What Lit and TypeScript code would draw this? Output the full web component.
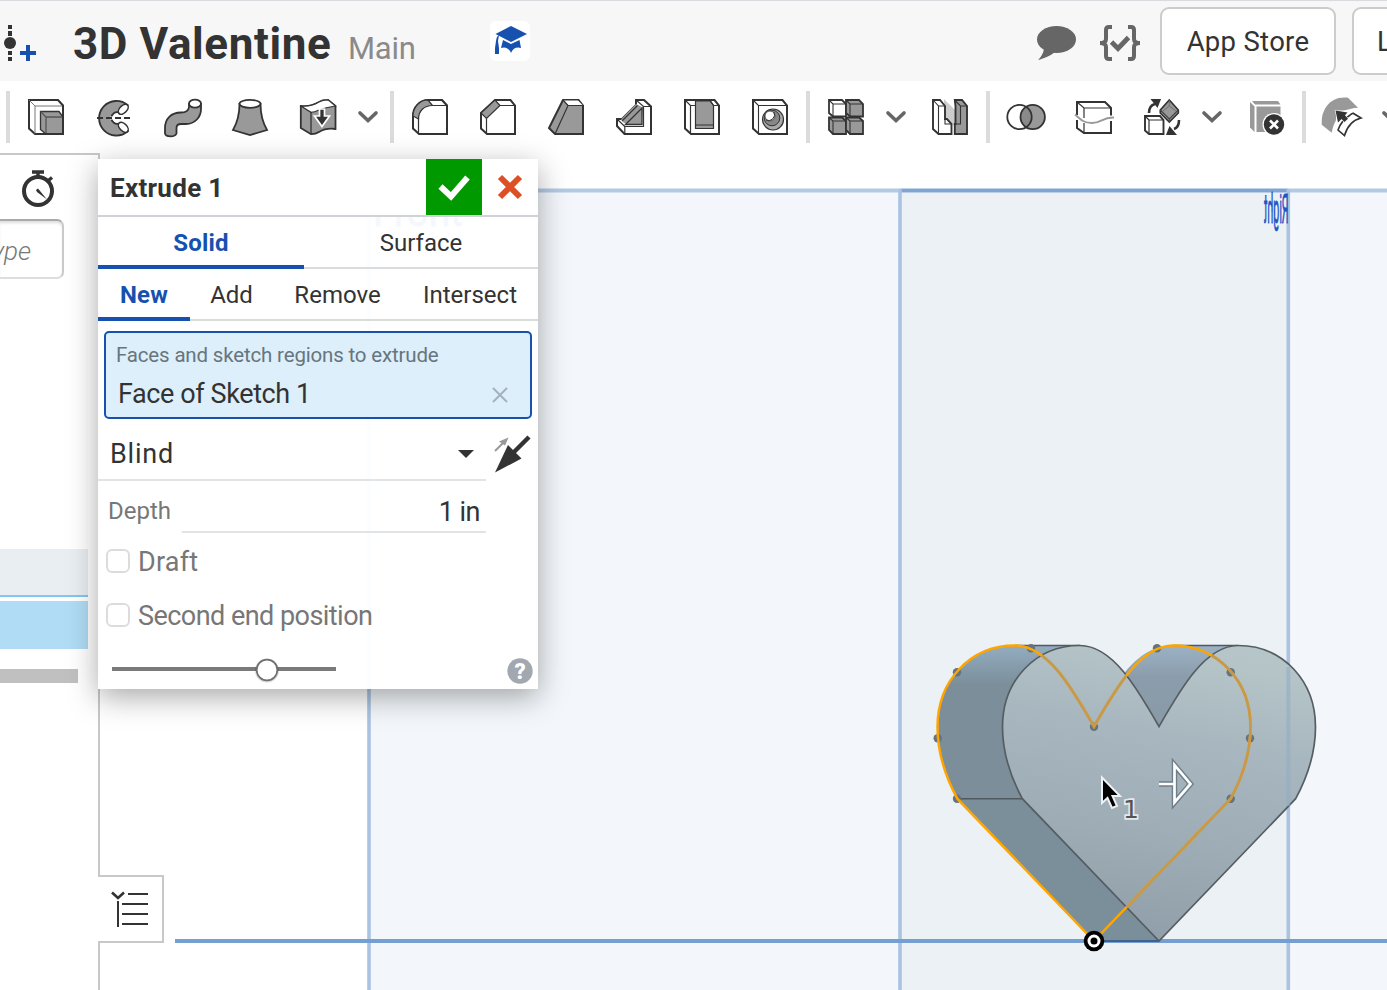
import { LitElement, html, css, svg } from "lit";
import { customElement, property } from "lit/decorators.js";

const D = "#333";
const G = "#999";

const glyphs: Record<string, unknown> = {
  extrude: svg`<path d="M1 1H30L35 6.5V35H7L1 29.5Z" fill="#fff" stroke=${D} stroke-width="2"/>
    <path d="M1 1L7 7V35M7 7H35" fill="none" stroke="#777"/>
    <path d="M12.5 12.5H31L35 18V35H18L12.5 30.5Z" fill=${G} stroke=${D} stroke-width="1.3"/>
    <path d="M12.5 12.5L18 18V35M18 18H35" fill="none" stroke="#555" stroke-width="1.3"/><path d="M35 6V35H7" fill="none" stroke=${D} stroke-width="2"/>`,
  revolve: svg`<path d="M31.5 6A17.3 17.3 0 1 0 31.5 32.5L23 24.5A5.8 5.8 0 1 1 23 13.5Z" fill=${G} stroke=${D} stroke-width="1.8"/>
    <ellipse cx="27.3" cy="10.3" rx="6" ry="3.6" transform="rotate(-46 27.3 10.3)" fill="#fff" stroke=${D} stroke-width="1.6"/>
    <ellipse cx="27.3" cy="28.300" rx="6" ry="3.6" transform="rotate(46 27.3 28.300)" fill="#fff" stroke=${D} stroke-width="1.6"/>
    <path d="M14 19H30" stroke="#fff" stroke-width="3"/><path d="M1 19H36" stroke=${D} stroke-width="1.8" stroke-dasharray="6 3"/>`,
  sweep: svg`<path d="M25 5V8C24.5 12 22 13.5 17 13.5C7 13.5 1 20 1 29V34.5C2 38.3 11 38.3 12.5 34.5V29C12.5 26 14 25 17 25H22C31 25 37 18 37 10V5Z" fill=${G} stroke=${D} stroke-width="1.8"/>
    <ellipse cx="31" cy="4.7" rx="6" ry="4" fill="#fff" stroke=${D} stroke-width="1.8"/>`,
  loft: svg`<path d="M7.5 5C7.5 15 5 24 1 31L18 36L35 31C31 24 28.5 15 28.5 5Z" fill=${G} stroke=${D} stroke-width="1.8"/>
    <ellipse cx="18" cy="4.8" rx="10.5" ry="4" fill="#fff" stroke=${D} stroke-width="1.8"/>`,
  thicken: svg`<path d="M.8 7C8 8 14 6 19 3C22 1 25 .8 28 .8L35.5 7V30C28 29 24 30 19 33C16 35 14 35.2 11 35.2L.8 29Z" fill=${G} stroke=${D} stroke-width="1.8"/>
    <path d="M.8 7C8 8 14 6 19 3C22 1 25 .8 28 .8L35.5 7C28 8 24 9 19 11C16 12.5 14 13.3 11 13.3Z" fill="#fff" stroke=${D} stroke-width="1.2"/>
    <path d="M11 13V35" stroke=${D} stroke-width="1.3"/><path d="M19.5 10H24.5V17H29.5L22 27.5L14.5 17H19.5Z" fill=${D} stroke="#fff" stroke-width="1.7"/>`,
  fillet: svg`<path d="M1 17C1 8 8 1 16 1H30L35 6.5V35H7L1 29.5Z" fill="#fff" stroke=${D} stroke-width="2"/>
    <path d="M1 17C1 8 8 1 16 1L20.5 6.5C12 6.5 6.5 12 6.5 20Z" fill=${G} stroke=${D} stroke-width="1.2"/><path d="M20 6.5H35M6.5 19V35M30 1L35 6.5" fill="none" stroke=${D} stroke-width="1.2"/>`,
  chamfer: svg`<path d="M1 14L15 1H30.5L35 6.5V35H7L1 29.5Z" fill="#fff" stroke=${D} stroke-width="2"/>
    <path d="M1 14L15 1L20 6.5L6.5 19.5Z" fill=${G} stroke=${D} stroke-width="1.2"/><path d="M20 6.5H35M6.5 19.5V35" fill="none" stroke=${D} stroke-width="1.2"/>`,
  draft: svg`<path d="M15 1H30.5L35 6.5V35H7L1 29Z" fill=${G} stroke=${D} stroke-width="2"/>
    <path d="M15.5 1.5H30L34.5 6H20Z" fill="#fff"/><path d="M7 35L20 6.5H35M15 1L20 6.5" fill="none" stroke=${D} stroke-width="1.2"/>`,
  rib: svg`<path d="M20 1H28L35 7.500V35H8.500L1 27V20H6L20 6Z" fill="#fff" stroke=${D} stroke-width="2"/>
    <path d="M5 20.500L20 5L27 8.500L25.500 24.500H10L8 24Z" fill=${G}/><path d="M9.500 25.500L26 9V25.500Z" fill=${G} stroke=${D} stroke-width="1.300"/>
    <path d="M1 20L8.800 27.500V35M20 1L27.500 7.500H35M8.800 27.500H27.500V7.500M6 22L21.500 6.500" fill="none" stroke=${D} stroke-width="1.200"/>`,
  shell: svg`<path d="M1 1H30.5L35 6.5V35H7L1 29.5Z" fill="#fff" stroke=${D} stroke-width="2"/>
    <path d="M11.5 2V29.5H29.5V6.5L26 2Z" fill=${G} stroke=${D} stroke-width="1.2"/><path d="M1 1L6.5 6.5V35M6.5 6.5H11.5M29.5 6.5H35M26 1L29.5 6.5M11.5 26H29.5" fill="none" stroke=${D} stroke-width="1.2"/>`,
  hole: svg`<path d="M1 1H30.5L35 6.5V35H7L1 29.5Z" fill="#fff" stroke=${D} stroke-width="2"/><path d="M1 1L6.5 6.5V35M6.5 6.5H35" fill="none" stroke=${D} stroke-width="1.1"/>
    <circle cx="21" cy="20.5" r="10.5" fill="#aaa" stroke=${D} stroke-width="1.2"/><circle cx="20" cy="19" r="7.8" fill="#888" stroke=${D} stroke-width="1"/><circle cx="18" cy="17" r="5" fill="#fff" stroke="#555" stroke-width="1"/><path d="M22 13A6 6 0 0 1 14 21" fill="none" stroke=${D}/>`,
  pattern: svg`<g stroke=${D} stroke-width="1.8"><path d="M1 1H14L18 5V17.5H5L1 14Z" fill="#fff"/><path d="M18 1H31L35 5V17.5H22L18 14Z" fill=${G}/><path d="M1 18.5H14L18 22V35H5L1 31Z" fill=${G}/><path d="M18 18.5H31L35 22V35H22L18 31Z" fill=${G}/></g>
    <path d="M1 1L5 5V17.5M5 5H18M18 1L22 5V17.5M22 5H35M1 18.5L5 22V35M5 22H18M18 18.5L22 22V35M22 22H35" fill="none" stroke=${D} stroke-width="1.1"/>`,
  mirror: svg`<path d="M12 0L24 12V28L12 20Z" fill="#ccc"/><path d="M1 1H8L13 7V20H15L19.5 25V35H6.5L1 30Z" fill="#fff" stroke=${D} stroke-width="1.9"/><path d="M1 1L6.5 7V35M6.5 7H13M13 20V25H19.5" fill="none" stroke=${D} stroke-width="1.1"/>
    <path d="M22.8 1H30L35 7V35H22.8V25H23.500V7Z" fill=${G} stroke=${D} stroke-width="1.9"/><path d="M22.5 1L28.5 7H35M28.5 7V25H22.5" fill="none" stroke=${D} stroke-width="1.1"/>`,
  bool: svg`<circle cx="24.7" cy="18" r="12.2" fill=${G}/><path d="M18 7.8A12.2 12.2 0 0 1 18 28.2A12.2 12.2 0 0 1 18 7.8Z" fill="#8a8a8a"/><circle cx="11.5" cy="18" r="12.2" fill="none" stroke=${D} stroke-width="1.8"/><circle cx="24.7" cy="18" r="12.2" fill="none" stroke=${D} stroke-width="1.8"/>`,
  split: svg`<path d="M1 16V3H29L35 9V16.5M35 22V34H8L1 29V21" fill="none" stroke=${D} stroke-width="2"/><path d="M1 3L8 9H35M8 9V19M8 24V34" fill="none" stroke=${D} stroke-width="1.2"/><path d="M-1 15.5C5 21 8 24 16 24C26 24 26 18 38 18.5" fill="none" stroke=${G} stroke-width="1.8"/>`,
  transform: svg`<path d="M1 17H16L19.5 21V35H5L1 31.5Z" fill="#fff" stroke=${D} stroke-width="1.9"/><path d="M1 17L5 21V35M5 21H19.5" fill="none" stroke=${D} stroke-width="1.2"/>
    <path d="M25.300 1L34.300 11V14L25.300 23L16.300 14V11Z" fill=${G} stroke=${D} stroke-width="1.700"/><path d="M16.300 11L25.300 20L34.300 11M25.300 20V23" fill="none" stroke="#444" stroke-width="1.100"/><path d="M25.300 1V7L32 12M25.300 7L19 12" fill="none" stroke="#666" stroke-width=".8"/>
    <path d="M5 14C5 9 7 6 11 5" fill="none" stroke=${D} stroke-width="2.6"/><path d="M6.500 0H17L13.500 9Z" fill=${D}/><path d="M35 21C35 26 33 29 30 30" fill="none" stroke=${D} stroke-width="2.600"/><path d="M33 36H22L25.500 27Z" fill=${D}/>`,
  remove: svg`<path d="M2 2H28L30.500 5.500H5Z" fill=${G}/><path d="M0 3L4.500 7.500V33L0 28.500Z" fill=${G}/><path d="M6.500 7.500H30.500V33H6.500Z" fill=${G}/><circle cx="24" cy="25.500" r="11.500" fill="#fff"/><circle cx="24" cy="25.500" r="10.200" fill=${D}/><path d="M20 21.500L28 29.500M28 21.500L20 29.500" stroke="#fff" stroke-width="2.600"/>`,
  surface: svg`<path d="M-.3 25.700C-.3 20 0 16 1.500 13C3.500 8 7 3.500 11.300 1.300C15.500 -1.200 20 -1.600 26 -1.300L36 8.700C31 9 27 10 23 11.300L14 12V21.300C12 25 10.500 29 9.700 33.700Z" fill=${G}/>
    <path d="M16 31C18 25 22 20 27.500 16.500C29 15 30 14.400 31 14.200L39 19C31 21 25 28 22.500 36.500Z" fill="#fff" stroke=${D} stroke-width="1.600"/>
    <path d="M13.500 11.500L25.500 13.500L23 16.300L26 19.700L22.500 23L19.500 20L16 23.500Z" fill=${D} stroke="#fff" stroke-width="1.200" paint-order="stroke"/>`,
};

@customElement("tool-icon")
export class ToolIcon extends LitElement {
  static styles = css`
    :host { display: block; width: 36px; height: 36px; flex: none; }
    .glyph { display: block; overflow: visible; }
  `;
  @property() name = "";
  render() {
    return html`<svg class="glyph" width="36" height="36" viewBox="0 0 36 36">${glyphs[this.name]}</svg>`;
  }
}

const tools = [
  "|", "extrude", "revolve", "sweep", "loft", "thicken", "v",
  "|", "fillet", "chamfer", "draft", "rib", "shell", "hole",
  "|", "pattern", "v", "mirror",
  "|", "bool", "split", "transform", "v", "remove",
  "|", "surface", "v",
];

@customElement("feature-toolbar")
export class FeatureToolbar extends LitElement {
  static styles = css`
    :host { display: flex; height: 72px; align-items: center; padding-left: 6px; background: #fff; overflow: hidden; }
    .sep { width: 4px; height: 52px; flex: none; background: #dcdcdc; }
    .sep + .tool, .tool + .sep { margin-left: 18px; }
    .tool + .tool { margin-left: 32px; }
    .chev { display: block; width: 20px; height: 12px; flex: none; margin: 0 0 0 22px; overflow: visible; }
    .surface + .chev { margin-left: 24px; }
    .chev + .sep { margin-left: 12px; }
    .chev + .tool { margin-left: 26px; }
    .chev + .tool.remove { margin-left: 28px; }
    .remove + .sep, .sep + .surface { margin-left: 16px; }
  `;
  render() {
    return tools.map((t) =>
      t === "|" ? html`<div class="sep"></div>`
      : t === "v" ? html`<svg class="chev" viewBox="0 0 20 12"><path d="M2 2L10 9.500L18 2" fill="none" stroke="#666" stroke-width="3.600" stroke-linecap="round"/></svg>`
      : html`<tool-icon class="tool ${t}" name=${t}></tool-icon>`);
  }
}

@customElement("document-header")
export class DocumentHeader extends LitElement {
  static styles = css`
    :host { display: flex; box-sizing: border-box; height: 81px; background: #f7f7f7; border-top: 1px solid #d9d9de; color: #333; overflow: hidden; }
    .version { flex: none; width: 40px; height: 50px; margin-top: 19px; }
    .title { flex: none; width: 275px; margin-left: 33px; font-size: 44px; line-height: 52px; margin-top: 17px; font-weight: 700; white-space: nowrap; letter-spacing: 0.6px; }
    .branch { flex: none; width: 142px; font-size: 31px; line-height: 40px; margin-top: 28px; color: #8a8a8a; letter-spacing: -0.2px; }
    .learn { flex: none; width: 40px; height: 40px; margin-top: 20px; border-radius: 6px; background: #fff; }
    .spacer { flex: 1; }
    .chat { flex: none; width: 40px; height: 36px; margin: 24px 24px 0 0; }
    .code { flex: none; width: 40px; height: 36px; margin: 24px 20px 0 0; }
    .btn { flex: none; box-sizing: border-box; height: 68px; margin-top: 6px; border: 2px solid #ccc; border-radius: 9px; background: #fff; font-size: 27.500px; line-height: 65px; }
    .store { width: 176px; text-align: center; letter-spacing: 0.300px; }
    .learning { width: 35px; margin-left: 16px; padding-left: 23px; border-right: 0; border-radius: 9px 0 0 9px; overflow: hidden; }
  `;
  render() {
    return html`
      <svg class="version" viewBox="0 20 40 50"><g fill="#333"><rect x="8" y="25" width="4" height="4"/><rect x="8" y="31" width="4" height="5"/><circle cx="10" cy="43" r="6"/><rect x="8" y="51" width="4" height="4"/><rect x="8" y="57" width="4" height="4"/></g><path d="M20 53H36M28 45V61" stroke="#1651b0" stroke-width="4"/></svg>
      <div class="title">3D Valentine</div>
      <div class="branch">Main</div>
      <svg class="learn" viewBox="0 0 40 40"><g fill="#1651b0"><path d="M21 5L37 13L21 21L5.500 13Z"/><path d="M13 19L21 23L29.500 19L31 27C27 25.500 23 27 21 32C19 27 15 25.500 11 27Z"/><path d="M9 14L8 20L9 27V33H5V27L6 20C6.500 17 7 15 9 14Z"/></g></svg>
      <div class="spacer"></div>
      <svg class="chat" viewBox="0 0 40 36"><ellipse cx="20.500" cy="14.500" rx="19.500" ry="13.500" fill="#666"/><path d="M8 24C7 29 5 32 2 35C9 33 14 31 19 27Z" fill="#666"/></svg>
      <svg class="code" viewBox="0 0 40 36"><path d="M12 2H9Q6 2 6 5V14Q6 18 0 18Q6 18 6 22V31Q6 34 9 34H12M28 2H31Q34 2 34 5V14Q34 18 40 18Q34 18 34 22V31Q34 34 31 34H28" fill="none" stroke="#666" stroke-width="4"/><path d="M11.500 17L18 23.500L28.500 12.500" fill="none" stroke="#666" stroke-width="4.800"/></svg>
      <div class="btn store">App Store</div>
      <div class="btn learning">L</div>`;
  }
}

@customElement("feature-list")
export class FeatureList extends LitElement {
  static styles = css`
    :host { display: block; box-sizing: border-box; width: 100px; height: 100%; border-top: 2px solid #c8c8c8; border-right: 2px solid #c8c8c8; background: #fff; overflow: hidden; }
    .clock { display: block; margin: 14px 0 0 20px; }
    .filter { box-sizing: border-box; width: 64px; height: 60px; margin-top: 12px; border: 2px solid #c9c9c9; border-left: 0; border-top-color: #aaa; border-bottom-color: #ddd; border-radius: 0 7px 7px 0; box-shadow: inset 0 3px 3px -1px #ddd; padding-right: 31px; text-align: right; font-size: 26px; font-style: italic; font-weight: 300; line-height: 60px; color: #777; display: flex; justify-content: flex-end; }
    .row { width: 88px; height: 46px; margin-top: 270px; background: #e9eef2; border-bottom: 2px solid #84c6ef; }
    .active { width: 88px; height: 48px; margin-top: 4px; background: #b0dcf5; }
    .rollback { width: 78px; height: 14px; margin-top: 20px; background: #c0c0c0; }
  `;
  render() {
    return html`
      <svg class="clock" width="36" height="38" viewBox="20 169 36 38"><circle cx="38" cy="191" r="14" fill="none" stroke="#333" stroke-width="4"/><path d="M32 172H44M38 171V177M46.500 182L52 177.500" stroke="#333" stroke-width="3.400"/><path d="M36 190L38 188.500L47 199.500L37 192Z" fill="#333"/></svg>
      <div class="filter">ype</div>
      <div class="row"></div><div class="active"></div><div class="rollback"></div>`;
  }
}

const HEART = "M1159 726.5C1180 690 1205 645.500 1238 645.500C1283 645.500 1315.500 681 1315.500 727C1315.500 752 1309 774 1295.700 798.700L1159 941L1022.300 798.700C1009 774 1002.500 752 1002.500 727C1002.500 681 1035 645.500 1080 645.500C1113 645.500 1138 690 1159 726.500Z";
const points = [[1031, 648.3], [957, 672.3], [937.7, 738.3], [957, 798.7], [1157, 648.3], [1230.7, 672.3], [1250, 738.3], [1230.7, 798.7], [1094, 726.7]];

@customElement("model-view")
export class ModelView extends LitElement {
  static styles = css`
    :host { display: block; height: 100%; background: #fff; overflow: hidden; }
    .scene { display: block; }
    .plane { font-family: Roboto, sans-serif; font-size: 41px; fill: #1f55c4; }
    .count { font-family: "DejaVu Sans", sans-serif; font-size: 25px; fill: #555; stroke: #e4e9eb; stroke-width: 3.500px; paint-order: stroke; }
  `;
  render() {
    return html`<svg class="scene" width="1287" height="837" viewBox="100 153 1287 837">
      <defs>
        <linearGradient id="face" x1=".6" y1="0" x2=".4" y2="1"><stop offset="0" stop-color="#b6c6c8"/><stop offset=".35" stop-color="#a6b5be"/><stop offset=".65" stop-color="#9eacb5"/><stop offset="1" stop-color="#8f9ea8"/></linearGradient>
        <linearGradient id="side" gradientUnits="userSpaceOnUse" x1="0" y1="645" x2="0" y2="685"><stop offset="0" stop-color="#93adc1"/><stop offset="1" stop-color="#7b8e9a"/></linearGradient>
        <linearGradient id="notch" gradientUnits="userSpaceOnUse" x1="0" y1="645" x2="0" y2="725"><stop offset="0" stop-color="#9bb2c5"/><stop offset=".4" stop-color="#8b9dac"/><stop offset="1" stop-color="#8999a6"/></linearGradient>
        <clipPath id="front"><path d=${HEART}/></clipPath>
      </defs>
      <rect x="369" y="190" width="1018" height="800" fill="#f3f7fb"/>
      <rect x="900" y="190" width="388" height="800" fill="#ecf1f5"/>
      <path d="M369 190.500H1387" stroke="#b3cae3" stroke-width="4"/><path d="M900 190.500H1288" stroke="#7fa5d2" stroke-width="3.500"/>
      <path d="M369 189V990M900 189V990M1288.300 189V990" stroke="#a9c3e1" stroke-width="3.600"/>
      <path d="M175 941H1387" stroke="#759fd0" stroke-width="4"/>
      <text class="plane" x="373" y="226" textLength="90" lengthAdjust="spacingAndGlyphs" stroke="#1f55c4" stroke-width="1">Front</text>
      <g transform="translate(1288.500 222.500) scale(-.262 1)"><text class="plane" x="0" y="0" stroke="#1f55c4" stroke-width=".8">Right</text></g>
      <path d=${HEART} transform="translate(-65 0)" fill="url(#side)"/>
      <path d="M957.300 798.700H1022.300L1159 941H1094Z" fill="#7b8f9b"/>
      <path d="M1015 645.500H1085L1050 690Z" fill="url(#side)"/>
      <path d="M1113 690C1128 665 1146 645.500 1173 645.500H1240L1200 670L1159 728L1110 700Z" fill="url(#notch)"/>
      <path d="M1015 645.500H1080M1173 645.500H1238M957.300 798.700H1022.300" stroke="#4f5a60" stroke-width="1.500"/><path d="M1094 941H1159" stroke="#3f6290" stroke-width="2"/>
      <path d=${HEART} fill="url(#face)" stroke="#555d62" stroke-width="1.700"/>
      <path d="M1288.300 667V806" stroke="#8fabc6" stroke-opacity=".55" stroke-width="4"/>
      ${points.map(([x, y]) => svg`<circle cx=${x} cy=${y} r="4.200" fill="#65737f"/>`)}
      <path d=${HEART} transform="translate(-65 0)" fill="none" stroke="#ffa500" stroke-width="2.500"/>
      <g clip-path="url(#front)"><path d=${HEART} transform="translate(-65 0)" fill="none" stroke="#c79a4b" stroke-width="2.800"/></g>
      <circle cx="1094" cy="941" r="10.300" fill="#000"/><circle cx="1094" cy="941" r="5" fill="#000" stroke="#fff" stroke-width="3"/>
      <path d="M1159 784H1174M1174.500 765V802.500L1190.500 784Z" fill="none" stroke="#6f7f8a" stroke-width="5.500"/>
      <path d="M1159 784H1174M1174.500 765V802.500L1190.500 784Z" fill="none" stroke="#fff" stroke-width="2.700"/>
      <path d="M1102 777.500V803L1107.500 798L1112 808L1117 806L1112.500 796H1120Z" fill="#000" stroke="#eef1f3" stroke-width="2"/>
      <text class="count" x="1123" y="818">1</text>
    </svg>`;
  }
}

@customElement("extrude-dialog")
export class ExtrudeDialog extends LitElement {
  static styles = css`
    :host { display: block; width: 440px; height: 530px; background: rgba(255, 255, 255, 0.955); box-shadow: 0 8px 28px rgba(0, 0, 0, 0.34); color: #333; }
    .head { display: flex; height: 56px; background: #fff; border-bottom: 2px solid #cfd3d7; }
    .name { flex: 1; padding-left: 12px; font-size: 26px; line-height: 58px; font-weight: 700; letter-spacing: 0.3px; }
    .ok { width: 56px; height: 56px; background: #009900; }
    .cancel { width: 56px; height: 56px; }
    .tabs { display: flex; height: 50px; border-bottom: 2px solid #d9dbdd; font-size: 24px; line-height: 52px; text-align: center; letter-spacing: 0; }
    .tab { box-sizing: border-box; height: 52px; flex: none; }
    .on { color: #1651b0; font-weight: 700; border-bottom: 4px solid #1651b0; letter-spacing: 0.2px; }
    .solid { width: 206px; } .surf { width: 234px; }
    .new { width: 92px; } .add { width: 83px; } .rem { width: 129px; } .int { width: 136px; }
    .pick { box-sizing: border-box; width: 428px; height: 88px; margin: 10px 0 0 6px; border: 2px solid #1651b0; border-radius: 5px; background: #dceffb; }
    .hint { padding-left: 10px; font-size: 20.500px; line-height: 44px; color: #67757e; letter-spacing: -0.17px; white-space: nowrap; }
    .chosen { display: flex; justify-content: space-between; align-items: center; padding: 0 22px 0 12px; font-size: 27px; line-height: 35px; letter-spacing: -0.4px; }
    .end { display: flex; height: 62px; }
    .type { display: flex; box-sizing: border-box; width: 388px; height: 52px; margin-top: 10px; padding: 0 12px; border-bottom: 2px solid #e1e3e4; justify-content: space-between; align-items: center; font-size: 27px; letter-spacing: 0.8px; }
    .flip { margin: 13px 0 0 5px; }
    .depth { display: flex; height: 52px; width: 388px; }
    .label { width: 74px; padding-left: 10px; font-size: 24px; line-height: 60px; color: #777; }
    .value { flex: 1; box-sizing: border-box; height: 52px; padding-right: 6px; text-align: right; border-bottom: 2px solid #e1e3e4; font-size: 27px; line-height: 63px; letter-spacing: -0.5px; }
    .opt { display: flex; align-items: center; height: 54px; padding-left: 8px; gap: 8px; font-size: 27px; color: #777; }
    .caption { padding-top: 2px; }
    .tight { letter-spacing: -0.54px; }
    .loose { letter-spacing: 0.2px; }
    .first { margin-top: 1px; }
    .box { box-sizing: border-box; width: 24px; height: 24px; border: 2px solid #dcdcdc; border-radius: 6px; background: #fff; }
    .foot { display: block; }
    .q { font-family: Roboto, sans-serif; font-size: 22px; font-weight: 900; fill: #fff; }
  `;
  render() {
    return html`
      <div class="head">
        <div class="name">Extrude 1</div>
        <svg class="ok" viewBox="0 0 56 56"><path d="M14.500 27.500L25 37.500L41.500 18.500" fill="none" stroke="#fff" stroke-width="6"/></svg>
        <svg class="cancel" viewBox="0 0 56 56"><path d="M18 18L38 38M38 18L18 38" stroke="#dd5026" stroke-width="6"/></svg>
      </div>
      <div class="tabs"><div class="tab solid on">Solid</div><div class="tab surf">Surface</div></div>
      <div class="tabs"><div class="tab new on">New</div><div class="tab add">Add</div><div class="tab rem">Remove</div><div class="tab int">Intersect</div></div>
      <div class="pick">
        <div class="hint">Faces and sketch regions to extrude</div>
        <div class="chosen"><span>Face of Sketch 1</span><svg width="16" height="16" viewBox="0 0 16 16"><path d="M1 1L15 15M15 1L1 15" stroke="#a3b2bb" stroke-width="2"/></svg></div>
      </div>
      <div class="end">
        <div class="type"><span>Blind</span><svg width="16" height="8" viewBox="0 0 16 8"><path d="M0 0H16L8 8Z" fill="#333"/></svg></div>
        <svg class="flip" width="40" height="44" viewBox="491 432 40 44"><path d="M529 437L513 453" stroke="#333" stroke-width="4.500"/><path d="M495 472.500L508 445L521.500 458.500Z" fill="#333"/><path d="M495 451L503 443" stroke="#999" stroke-width="2"/><path d="M508.500 437.500L505 445.500L499 441.500Z" fill="#999"/></svg>
      </div>
      <div class="depth"><div class="label">Depth</div><div class="value">1 in</div></div>
      <div class="opt first"><div class="box"></div><span class="caption loose">Draft</span></div>
      <div class="opt"><div class="box"></div><span class="caption tight">Second end position</span></div>
      <svg class="foot" width="440" height="47" viewBox="98 642 440 47">
        <path d="M112 669H336" stroke="#7a7a7a" stroke-width="4"/><circle cx="267" cy="670.500" r="12" fill="#000" opacity=".15"/><circle cx="267" cy="670" r="10.300" fill="#fff" stroke="#707070" stroke-width="1.700"/>
        <circle cx="520" cy="671" r="12.700" fill="#a3a7af"/><text class="q" x="520" y="679" text-anchor="middle">?</text>
      </svg>`;
  }
}

@customElement("app-root")
export class AppRoot extends LitElement {
  static styles = css`
    :host { display: flex; flex-direction: column; width: 1387px; height: 990px; overflow: hidden; background: #fff; font-family: Roboto, sans-serif; }
    .work { position: relative; display: grid; grid-template-columns: 100px 1287px; height: 837px; }
    .dialog { position: absolute; left: 98px; top: 6px; }
    .tree { position: absolute; left: 98px; top: 722px; box-sizing: border-box; width: 66px; height: 68px; border: 2px solid #c8c8c8; border-left: 0; background: #fff; }
  `;
  render() {
    return html`
      <document-header></document-header>
      <feature-toolbar></feature-toolbar>
      <div class="work">
        <feature-list></feature-list>
        <model-view></model-view>
        <svg class="tree" viewBox="98 877 64 64"><path d="M112 892.500L118 898L124 892.500" fill="none" stroke="#333" stroke-width="2.600"/><path d="M128 894H148M122 904H148M122 914H148M122 924H148M118 901V927" stroke="#333" stroke-width="2"/></svg>
        <extrude-dialog class="dialog"></extrude-dialog>
      </div>`;
  }
}
